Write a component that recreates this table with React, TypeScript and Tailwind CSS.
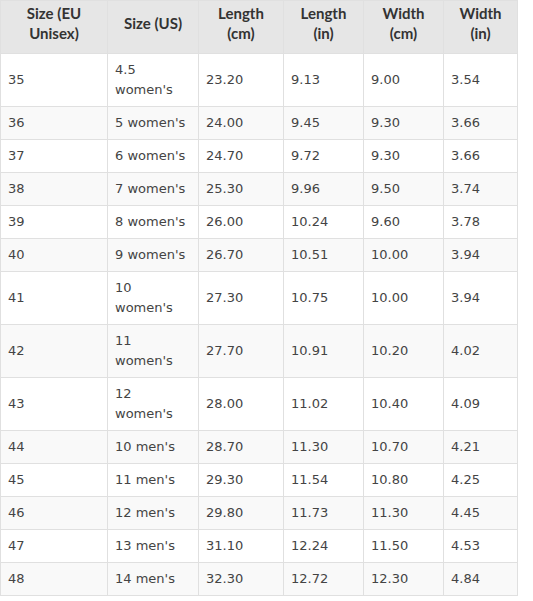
import React from 'react';

const rows: [string, string, string, string, string, string][] = [
  ['35', '4.5 women\'s', '23.20', '9.13', '9.00', '3.54'],
  ['36', '5 women\'s', '24.00', '9.45', '9.30', '3.66'],
  ['37', '6 women\'s', '24.70', '9.72', '9.30', '3.66'],
  ['38', '7 women\'s', '25.30', '9.96', '9.50', '3.74'],
  ['39', '8 women\'s', '26.00', '10.24', '9.60', '3.78'],
  ['40', '9 women\'s', '26.70', '10.51', '10.00', '3.94'],
  ['41', '10 women\'s', '27.30', '10.75', '10.00', '3.94'],
  ['42', '11 women\'s', '27.70', '10.91', '10.20', '4.02'],
  ['43', '12 women\'s', '28.00', '11.02', '10.40', '4.09'],
  ['44', '10 men\'s', '28.70', '11.30', '10.70', '4.21'],
  ['45', '11 men\'s', '29.30', '11.54', '10.80', '4.25'],
  ['46', '12 men\'s', '29.80', '11.73', '11.30', '4.45'],
  ['47', '13 men\'s', '31.10', '12.24', '11.50', '4.53'],
  ['48', '14 men\'s', '32.30', '12.72', '12.30', '4.84'],
];

const headers = [
  ['Size (EU', 'Unisex)'],
  ['Size (US)'],
  ['Length', '(cm)'],
  ['Length', '(in)'],
  ['Width', '(cm)'],
  ['Width', '(in)'],
];

const widths = ['w-[107px]', 'w-[91px]', 'w-[85px]', 'w-[80px]', 'w-[80px]', 'w-[74px]'];

export default function App() {
  return (
    <div className="w-[533px] h-[601px] bg-white overflow-hidden">
      <table className="border-collapse table-fixed w-[518px] font-['DejaVu_Sans',sans-serif] text-[13px] leading-[20px] text-[#444]">
        <thead>
          <tr className="bg-[#e6e6e6]">
            {headers.map((h, i) => (
              <th
                key={i}
                className={`${widths[i]} border border-[#e0e0e0] px-[7px] pt-[2px] pb-[10px] text-center font-bold text-[#333] font-['Lato',sans-serif] text-[15px]`}
              >
                {h.map((line, j) => (
                  <div key={j}>{line}</div>
                ))}
              </th>
            ))}
          </tr>
        </thead>
        <tbody>
          {rows.map((r, i) => (
            <tr key={i} className={i % 2 === 0 ? 'bg-white' : 'bg-[#f9f9f9]'}>
              {r.map((c, j) => (
                <td key={j} className="border border-[#e0e0e0] px-[7px] py-[6px] align-middle text-left">
                  {c}
                </td>
              ))}
            </tr>
          ))}
        </tbody>
      </table>
    </div>
  );
}
